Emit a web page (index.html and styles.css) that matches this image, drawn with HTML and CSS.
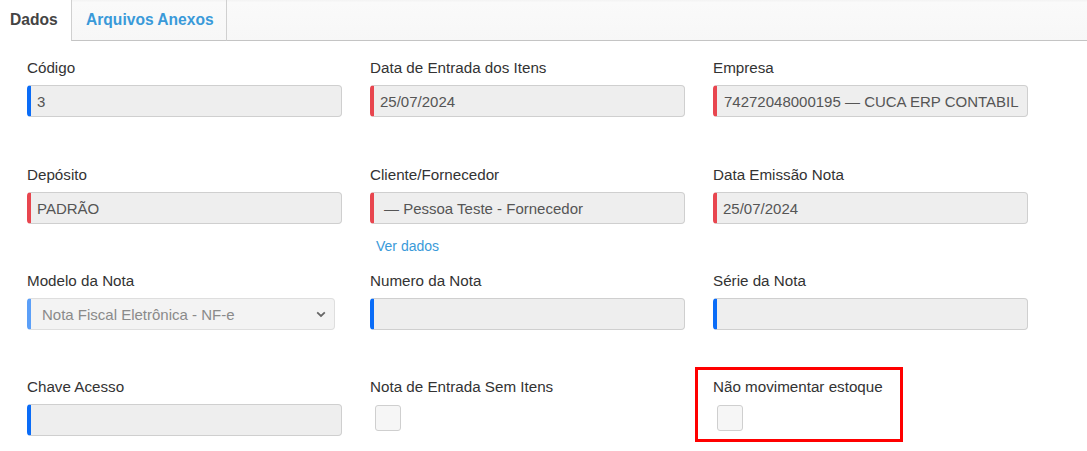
FILE: index.html
```html
<!DOCTYPE html>
<html lang="pt-BR">
<head>
<meta charset="utf-8">
<title>Nota de Entrada</title>
<link rel="stylesheet" href="styles.css">
</head>
<body>
<div class="page">
  <div class="tabs">
    <div class="tab tab-active">Dados</div>
    <div class="tab tab-link">Arquivos Anexos</div>
    <div class="tab-fill"></div>
  </div>
  <div class="form">
    <div class="field">
      <div class="label">Código</div>
      <div class="control mark-blue"><span class="val">3</span></div>
    </div>
    <div class="field">
      <div class="label">Data de Entrada dos Itens</div>
      <div class="control mark-red"><span class="val">25/07/2024</span></div>
    </div>
    <div class="field">
      <div class="label">Empresa</div>
      <div class="control mark-red"><span class="val val-emp">74272048000195 — CUCA ERP CONTABIL</span></div>
    </div>

    <div class="field">
      <div class="label">Depósito</div>
      <div class="control mark-red"><span class="val">PADRÃO</span></div>
    </div>
    <div class="field">
      <div class="label">Cliente/Fornecedor</div>
      <div class="control mark-red"><span class="val val-wide">— Pessoa Teste - Fornecedor</span></div>
      <a class="link">Ver dados</a>
    </div>
    <div class="field">
      <div class="label">Data Emissão Nota</div>
      <div class="control mark-red"><span class="val">25/07/2024</span></div>
    </div>

    <div class="field">
      <div class="label">Modelo da Nota</div>
      <div class="control select mark-light">
        <span class="val val-select">Nota Fiscal Eletrônica - NF-e</span>
        <svg class="chev" width="10" height="7" viewBox="0 0 10 7"><path d="M1.2 1.4 L5 5 L8.8 1.4" fill="none" stroke="#666" stroke-width="1.8"/></svg>
      </div>
    </div>
    <div class="field">
      <div class="label">Numero da Nota</div>
      <div class="control mark-blue"></div>
    </div>
    <div class="field">
      <div class="label">Série da Nota</div>
      <div class="control mark-blue"></div>
    </div>

    <div class="field">
      <div class="label">Chave Acesso</div>
      <div class="control mark-blue"></div>
    </div>
    <div class="field">
      <div class="label">Nota de Entrada Sem Itens</div>
      <div class="check check-c2"></div>
    </div>
    <div class="field">
      <div class="label">Não movimentar estoque</div>
      <div class="check check-c3"></div>
    </div>
  </div>
  <div class="highlight"></div>
</div>
</body>
</html>
```
FILE: styles.css
```css
* { box-sizing: border-box; }
html, body { margin: 0; padding: 0; background: #fff; }
body {
  font-family: "Liberation Sans", Arial, sans-serif;
  color: #333;
}
.page { position: relative; width: 1087px; height: 451px; overflow: hidden; }

.tabs {
  display: flex;
  height: 41px;
  background: linear-gradient(#f3f3f3, #fafafa 6%, #f7f7f7);
}
.tab {
  height: 41px;
  font-size: 15.6px;
  font-weight: bold;
  line-height: 40px;
  white-space: nowrap;
}
.tab-active {
  background: #fff;
  color: #444;
  padding: 0 13px 0 10px;
  width: 71px;
}
.tab-link {
  color: #3a9ad9;
  padding: 0 13px 0 14px;
  border-left: 1px solid #d0d0d0;
  border-right: 1px solid #d0d0d0;
  border-bottom: 1px solid #c4c4c4;
  width: 156px;
}
.tab-fill { flex: 1; border-bottom: 1px solid #c4c4c4; }

.form {
  display: grid;
  grid-template-columns: repeat(3, 315px);
  grid-template-rows: 107px 106px 106px 106px;
  column-gap: 28px;
  padding: 18px 0 0 27px;
}
.field { display: flex; flex-direction: column; align-items: flex-start; }
.label {
  font-size: 15.2px;
  line-height: 18px;
  height: 18px;
  margin-bottom: 8px;
  color: #333;
  white-space: nowrap;
}
.control {
  position: relative;
  width: 315px;
  height: 32px;
  background: #eee;
  border: 1px solid #cfcfcf;
  border-left-width: 4px;
  border-radius: 4px;
  display: flex;
  align-items: center;
  overflow: hidden;
}
.mark-blue { border-left-color: #0a6cf7; }
.mark-red { border-left-color: #e8464f; }
.mark-light { background: #f3f3f3; border-color: #dedede; border-left-color: #5b9ff8; width: 308px; }
.val {
  font-size: 15px;
  color: #555;
  padding: 0 6px;
  white-space: nowrap;
}
.val-emp { padding-left: 7px; }
.val-wide { padding-left: 10px; }
.val-select { color: #8a8a8a; padding-left: 11px; }
.chev { position: absolute; right: 8px; top: 12px; }

.link {
  margin-top: 14px;
  margin-left: 6px;
  font-size: 14px;
  line-height: 16px;
  color: #3a9ad9;
}
.check {
  width: 26px;
  height: 26px;
  margin-top: 1px;
  background: #f6f6f6;
  border: 1px solid #cfcfcf;
  border-radius: 3px;
}
.check-c2 { margin-left: 5px; }
.check-c3 { margin-left: 4px; }

.highlight {
  position: absolute;
  left: 695px;
  top: 367px;
  width: 208px;
  height: 75px;
  border: 3px solid #f00;
}
```
